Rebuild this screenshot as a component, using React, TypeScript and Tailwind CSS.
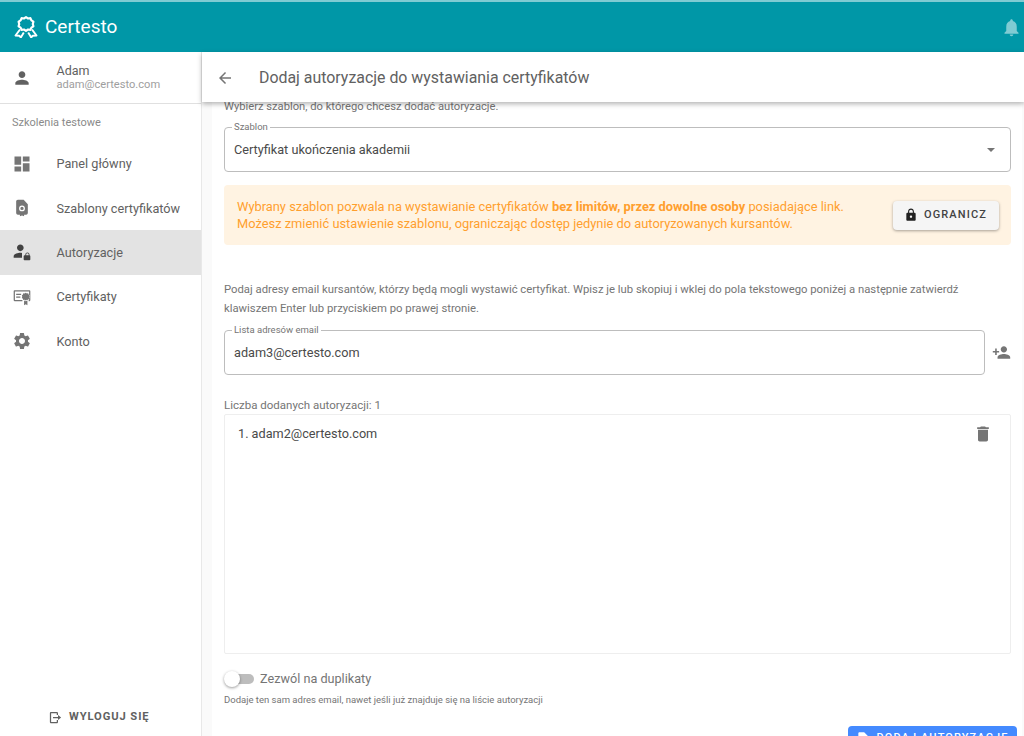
import React from "react";

const P = ({ d, className = "" }: { d: string; className?: string }) => (
  <svg viewBox="0 0 24 24" fill="currentColor" fillRule="evenodd" className={className}>
    <path d={d} />
  </svg>
);

const icons = {
  person: "M12 12c2.21 0 4-1.79 4-4s-1.79-4-4-4-4 1.79-4 4 1.79 4 4 4zm0 2c-2.67 0-8 1.34-8 4v2h16v-2c0-2.66-5.33-4-8-4z",
  dashboard: "M3 13h8V3H3v10zm0 8h8v-6H3v6zm10 0h8V11h-8v10zm0-18v6h8V3h-8z",
  template: "M14 2H7C6 2 5 3 5 4v14c0 1 1 2 2 2h2.500v2l2.500-1 2.500 1v-2H17c1 0 2-1 2-2V7.500L14 2zM12 16a3.500 3.500 0 1 1 0-7 3.500 3.500 0 0 1 0 7zM12 14.500a2 2 0 1 0 0-4 2 2 0 0 0 0 4z",
  auth: "M10 11c2.21 0 4-1.79 4-4s-1.79-4-4-4-4 1.790-4 4 1.790 4 4 4zm2 2.300c-.7-.2-1.400-.3-2-.3-2.670 0-8 1.340-8 4v2h10v-5.700zM21 16v-1a2.500 2.500 0 0 0-5 0v1h-1c-.55 0-1 .45-1 1v4c0 .55.45 1 1 1h6c.55 0 1-.45 1-1v-4c0-.55-.45-1-1-1h-1zm-1 0h-3v-1a1.500 1.500 0 0 1 3 0v1z",
  certificate: "M3 4h18a1 1 0 0 1 1 1v11a1 1 0 0 1-1 1h-1v-1.500h.5V5.500h-17v10h9V17H3a1 1 0 0 1-1-1V5a1 1 0 0 1 1-1zM5 8h6v1.500H5zM5 11.500h5V13H5zM16.500 6.800l1.300.9 1.600-.1.500 1.500 1.300 1-.5 1.500.5 1.500-1.300 1-.5 1.400-1.600-.1-1.300.9-1.300-.9-1.600.1-.5-1.400-1.300-1 .5-1.500-.5-1.500 1.300-1 .5-1.500 1.600.1zM14.500 16.200l2 .8 2-.8V22l-2-1.200-2 1.200z",
  gear: "M19.14 12.94c.04-.3.06-.61.06-.94 0-.32-.02-.64-.07-.94l2.03-1.58a.49.49 0 0 0 .12-.61l-1.92-3.32a.488.488 0 0 0-.59-.22l-2.39.96c-.5-.38-1.03-.7-1.62-.94l-.36-2.54a.484.484 0 0 0-.48-.41h-3.84c-.24 0-.43.17-.47.41l-.36 2.54c-.59.24-1.13.57-1.62.94l-2.39-.96c-.22-.08-.47 0-.59.22L2.74 8.87c-.12.21-.08.47.12.61l2.03 1.58c-.05.3-.09.63-.09.94s.02.64.07.94l-2.03 1.58a.49.49 0 0 0-.12.61l1.92 3.32c.12.22.37.29.59.22l2.39-.96c.5.38 1.03.7 1.62.94l.36 2.54c.05.24.24.41.48.41h3.84c.24 0 .44-.17.47-.41l.36-2.54c.59-.24 1.13-.56 1.62-.94l2.39.96c.22.08.47 0 .59-.22l1.92-3.32c.12-.22.07-.47-.12-.61l-2.01-1.58zM12 15.6c-1.98 0-3.6-1.62-3.6-3.6s1.62-3.6 3.6-3.6 3.600 1.620 3.600 3.600-1.620 3.600-3.600 3.600z",
  logout: "M5 3h9c1.100 0 2 .9 2 2v3h-2V5H5v14h9v-3h2v3c0 1.100-.9 2-2 2H5c-1.100 0-2-.9-2-2V5c0-1.100.9-2 2-2zm11 5l5 4-5 4v-3H8v-2h8V8z",
  bell: "M12 22c1.100 0 2-.9 2-2h-4c0 1.100.9 2 2 2zm6-6v-5c0-3.070-1.630-5.640-4.500-6.320V4c0-.83-.67-1.500-1.500-1.500s-1.500.67-1.500 1.500v.68C7.640 5.360 6 7.920 6 11v5l-2 2v1h16v-1l-2-2z",
  back: "M20 11H7.830l5.590-5.590L12 4l-8 8 8 8 1.410-1.410L7.830 13H20v-2z",
  lock: "M18 8h-1V6c0-2.760-2.240-5-5-5S7 3.240 7 6v2H6c-1.100 0-2 .9-2 2v10c0 1.100.9 2 2 2h12c1.100 0 2-.9 2-2V10c0-1.100-.9-2-2-2zm-6 9c-1.100 0-2-.9-2-2s.9-2 2-2 2 .9 2 2-.9 2-2 2zm3.100-9H8.900V6c0-1.710 1.390-3.100 3.100-3.100s3.100 1.390 3.100 3.100v2z",
  addPerson: "M15 12c2.210 0 4-1.790 4-4s-1.790-4-4-4-4 1.790-4 4 1.790 4 4 4zm-9-2V7H4v3H1v2h3v3h2v-3h3v-2H6zm9 4c-2.670 0-8 1.340-8 4v2h16v-2c0-2.660-5.330-4-8-4z",
  trash: "M6 19c0 1.100.9 2 2 2h8c1.100 0 2-.9 2-2V7H6v12zM19 4h-3.500l-1-1h-5l-1 1H5v2h14V4z",
  save: "M14 2H6c-1.100 0-2 .9-2 2v16c0 1.100.9 2 2 2h12c1.100 0 2-.9 2-2V8l-6-6zM8 18v-2h8v2H8zm0-4v-2h8v2H8z",
};

const NavItem = ({ icon, label, active }: { icon: string; label: string; active?: boolean }) => (
  <div className={`flex h-[44.4px] items-center pl-[12px] ${active ? "bg-[#e3e3e3]" : ""}`}>
    <P d={icon} className={`h-[20px] w-[20px] ${active ? "text-[#424242]" : "text-[#757575]"}`} />
    <span className="ml-[24.500px] text-[12.700px] text-[#616161]">{label}</span>
  </div>
);

const Logo = () => (
  <svg viewBox="0 0 24 22" className="h-[22px] w-[24px]" fill="none" stroke="white">
    <path
      d="M12 1.200l2 1.300 2.400-.3 1 2.200 2 1.300-.6 2.300.6 2.300-2 1.300-1 2.200-2.400-.3-2 1.300-2-1.300-2.400.3-1-2.200-2-1.300.6-2.300-.6-2.300 2-1.300 1-2.200 2.400.3z"
      strokeWidth="2.200"
      strokeLinejoin="round"
    />
    <path d="M6 13.500L1.500 19.500l3.700.2 1.600 1.800 3-5M18 13.500l4.500 6-3.700.2-1.600 1.800-3-5" strokeWidth="1.900" strokeLinejoin="round" />
  </svg>
);

const Legend = ({ label }: { label: string }) => (
  <span className="absolute -top-[7px] left-[7px] bg-white px-[2px] text-[9.500px] leading-[12px] text-[#757575]">{label}</span>
);

export default function App() {
  return (
    <div className="flex h-[736px] w-[1024px] flex-col overflow-hidden bg-white font-['Roboto',sans-serif]">
      <header className="flex h-[52px] shrink-0 items-center border-t-[2px] border-[#7fcbd3] bg-[#0097a7] pl-[14px] pr-[2.500px]">
        <Logo />
        <span className="ml-[7px] text-[19px] text-white">Certesto</span>
        <P d={icons.bell} className="ml-auto h-[21px] w-[21px] text-[#80cbd3]" />
      </header>
      <div className="flex min-h-0 flex-1">
        <aside className="flex w-[202px] shrink-0 flex-col border-r border-[#e8e8e8] bg-white">
          <div className="flex h-[52px] shrink-0 items-center border-b border-[#e0e0e0] pl-[12px]">
            <P d={icons.person} className="h-[20px] w-[20px] text-[#616161]" />
            <div className="ml-[24.500px]">
              <div className="text-[12.500px] leading-[15px] text-[#616161]">Adam</div>
              <div className="text-[11.100px] leading-[14px] text-[#9e9e9e]">adam@certesto.com</div>
            </div>
          </div>
          <div className="flex h-[37.500px] items-center pl-[12px] pt-[1px] text-[11px] text-[#8a8a8a]">Szkolenia testowe</div>
          <NavItem icon={icons.dashboard} label="Panel główny" />
          <NavItem icon={icons.template} label="Szablony certyfikatów" />
          <NavItem icon={icons.auth} label="Autoryzacje" active />
          <NavItem icon={icons.certificate} label="Certyfikaty" />
          <NavItem icon={icons.gear} label="Konto" />
          <div className="mt-auto flex h-[38px] items-center pl-[48px]">
            <P d={icons.logout} className="h-[15px] w-[15px] text-[#616161]" />
            <span className="ml-[6px] text-[11.200px] font-bold tracking-[0.9px] text-[#616161]">WYLOGUJ SIĘ</span>
          </div>
        </aside>
        <main className="flex min-w-0 flex-1 flex-col bg-[#fafafa]">
          <div className="relative z-10 flex h-[50px] shrink-0 items-center bg-white pl-[13.500px] shadow-[0_2px_5px_rgba(0,0,0,0.3)]">
            <P d={icons.back} className="mt-[1px] h-[18px] w-[18px] text-[#757575]" />
            <h1 className="ml-[25.500px] pt-[1px] text-[15.900px] font-normal text-[#616161]">Dodaj autoryzacje do wystawiania certyfikatów</h1>
          </div>
          <div className="ml-[10px] mr-[2px] min-h-0 flex-1 overflow-hidden bg-white pl-[12px] pr-[11px]">
            <p className="-mt-[2px] text-[11.200px] leading-[14px] text-[#757575]">Wybierz szablon, do którego chcesz dodać autoryzacje.</p>
            <div className="relative mt-[13px] flex h-[45px] items-center justify-between rounded-[4px] border border-[#bdbdbd] pl-[9px] pr-[15px]">
              <Legend label="Szablon" />
              <span className="text-[12.700px] text-[#4a4a4a]">Certyfikat ukończenia akademii</span>
              <span className="h-0 w-0 border-x-[4px] border-t-[4px] border-x-transparent border-t-[#757575]" />
            </div>
            <div className="mt-[13px] flex h-[60px] items-center justify-between rounded-[4px] bg-[#fff3e2] pl-[13px] pr-[12.500px]">
              <p className="text-[12.850px] leading-[17px] text-[#ff9f2e]">
                Wybrany szablon pozwala na wystawianie certyfikatów <b className="font-bold">bez limitów, przez dowolne osoby</b> posiadające link.
                <br />
                Możesz zmienić ustawienie szablonu, ograniczając dostęp jedynie do autoryzowanych kursantów.
              </p>
              <button className="flex h-[29px] w-[106px] items-center justify-center rounded-[4px] bg-[#f5f5f5] shadow-[0_1px_3px_rgba(0,0,0,0.35)]">
                <P d={icons.lock} className="h-[14px] w-[14px] text-[#212121]" />
                <span className="ml-[6px] text-[11px] font-medium tracking-[1.100px] text-[#424242]">OGRANICZ</span>
              </button>
            </div>
            <p className="mt-[35px] text-[11.300px] leading-[19px] text-[#757575]">
              Podaj adresy email kursantów, którzy będą mogli wystawić certyfikat. Wpisz je lub skopiuj i wklej do pola tekstowego poniżej a następnie zatwierdź
              <br />
              klawiszem Enter lub przyciskiem po prawej stronie.
            </p>
            <div className="mt-[12px] flex items-center">
              <div className="relative flex h-[45px] flex-1 items-center rounded-[4px] border border-[#bdbdbd] pl-[9px]">
                <Legend label="Lista adresów email" />
                <span className="text-[12.700px] text-[#4a4a4a]">adam3@certesto.com</span>
              </div>
              <P d={icons.addPerson} className="ml-[7px] h-[19px] w-[19px] text-[#757575]" />
            </div>
            <p className="mt-[23px] text-[11.500px] leading-[14px] text-[#757575]">Liczba dodanych autoryzacji: 1</p>
            <div className="mt-[2px] h-[240px] rounded-[2px] border border-[#eeeeee] pl-[13px] pr-[17px] pt-[9px]">
              <div className="flex items-center justify-between">
                <span className="text-[12.700px] text-[#4a4a4a]">1. adam2@certesto.com</span>
                <P d={icons.trash} className="h-[20px] w-[20px] text-[#757575]" />
              </div>
            </div>
            <div className="mt-[15px] flex h-[20px] items-center">
              <div className="relative ml-[8px] h-[10px] w-[22px] rounded-full bg-[#bdbdbd]">
                <span className="absolute -left-[8px] -top-[3px] h-[16px] w-[16px] rounded-full bg-white shadow-[0_1px_3px_rgba(0,0,0,0.4)]" />
              </div>
              <span className="ml-[6px] text-[12.660px] text-[#757575]">Zezwól na duplikaty</span>
            </div>
            <p className="mt-[5px] text-[9.500px] leading-[12px] text-[#757575]">Dodaje ten sam adres email, nawet jeśli już znajduje się na liście autoryzacji</p>
            <div className="-mr-[6px] mt-[20px] flex justify-end">
              <button className="flex h-[30px] w-[169px] items-start justify-center rounded-[4px] bg-[#448aff] pt-[4px] text-white">
                <P d={icons.save} className="mt-[1px] h-[14px] w-[14px]" />
                <span className="ml-[6px] text-[11px] font-medium tracking-[1.100px]">DODAJ AUTORYZACJE</span>
              </button>
            </div>
          </div>
        </main>
      </div>
    </div>
  );
}
